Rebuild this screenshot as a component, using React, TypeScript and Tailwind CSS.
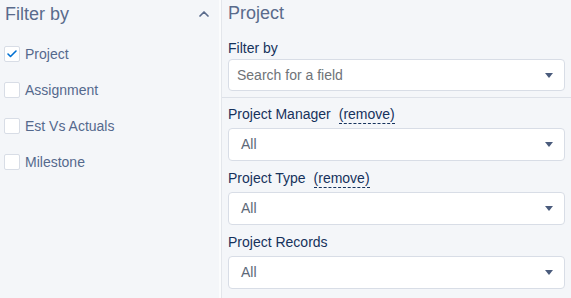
import { Check, ChevronUp } from 'lucide-react';

const FILTER_TYPES = [
  { name: 'Project', checked: true },
  { name: 'Assignment', checked: false },
  { name: 'Est Vs Actuals', checked: false },
  { name: 'Milestone', checked: false },
];

const FIELD_FILTERS = [
  { label: 'Project Manager', removable: true, value: 'All' },
  { label: 'Project Type', removable: true, value: 'All' },
  { label: 'Project Records', removable: false, value: 'All' },
];

function Caret() {
  return (
    <svg width="8" height="5" viewBox="0 0 8 5" className="shrink-0">
      <path d="M0 0 H8 L4 5 Z" fill="#4a5b7c" />
    </svg>
  );
}

function SelectBox({ value, placeholder }: { value?: string; placeholder?: string }) {
  return (
    <div
      className={
        value
          ? 'h-[33px] flex items-center justify-between bg-white border border-[#d8dde6] rounded-[4px] pl-[12px] pr-[11px]'
          : 'h-[32px] flex items-center justify-between bg-white border border-[#d8dde6] rounded-[4px] pl-[8px] pr-[11px]'
      }
    >
      {value ? (
        <span className="text-[14px] text-[#5c6878]">{value}</span>
      ) : (
        <span className="text-[14px] text-[#6f7378]">{placeholder}</span>
      )}
      <Caret />
    </div>
  );
}

export default function App() {
  return (
    <div
      className="w-[571px] h-[298px] flex bg-[#f4f6f9] overflow-hidden"
      style={{ fontFamily: '"Liberation Sans", Arial, sans-serif' }}
    >
      {/* Filter type list */}
      <div className="w-[221px] shrink-0 border-r-2 border-[#fbfcfd]">
        <div className="h-[36px] flex items-start justify-between pl-[5px] pr-[7px] pt-[2px]">
          <span className="text-[18px] leading-[24px] text-[#5a6b8c]">Filter by</span>
          <ChevronUp size={16} strokeWidth={2.6} className="text-[#5a6b8c] mt-[4px]" />
        </div>
        <div className="flex flex-col">
          {FILTER_TYPES.map(item => (
            <div key={item.name} className="h-[36px] flex items-center pl-[4px] gap-[5px]">
              <span className="w-[16px] h-[16px] flex items-center justify-center bg-white border border-[#d8dde6] rounded-[2px]">
                {item.checked && <Check size={12} strokeWidth={3.2} className="text-[#0070d2]" />}
              </span>
              <span className="text-[14px] leading-[20px] text-[#54698d]">{item.name}</span>
            </div>
          ))}
        </div>
      </div>

      {/* Project filters */}
      <div className="flex-1 border-l border-[#e3e6eb]">
        <div className="pl-[6px] pr-[6px]">
          <div className="text-[18px] leading-[24px] text-[#5a6b8c] pt-[1px]">Project</div>
          <div className="text-[14px] leading-[20px] text-[#16325c] mt-[13px]">Filter by</div>
          <div className="mt-[1px]">
            <SelectBox placeholder="Search for a field" />
          </div>
        </div>
        <div className="h-px bg-[#dde1e8] mt-[6px]" />
        <div className="pl-[6px] pr-[6px] pt-[6px] flex flex-col gap-[7px]">
          {FIELD_FILTERS.map(f => (
            <div key={f.label}>
              <div className="h-[20px] text-[14px] leading-[20px] text-[#16325c] whitespace-nowrap">
                {f.label}
                {f.removable && (
                  <span className="ml-[8px] inline-block leading-[17px] border-b border-dashed border-[#16325c]">
                    (remove)
                  </span>
                )}
              </div>
              <div className="mt-[4px]">
                <SelectBox value={f.value} />
              </div>
            </div>
          ))}
        </div>
      </div>
    </div>
  );
}
